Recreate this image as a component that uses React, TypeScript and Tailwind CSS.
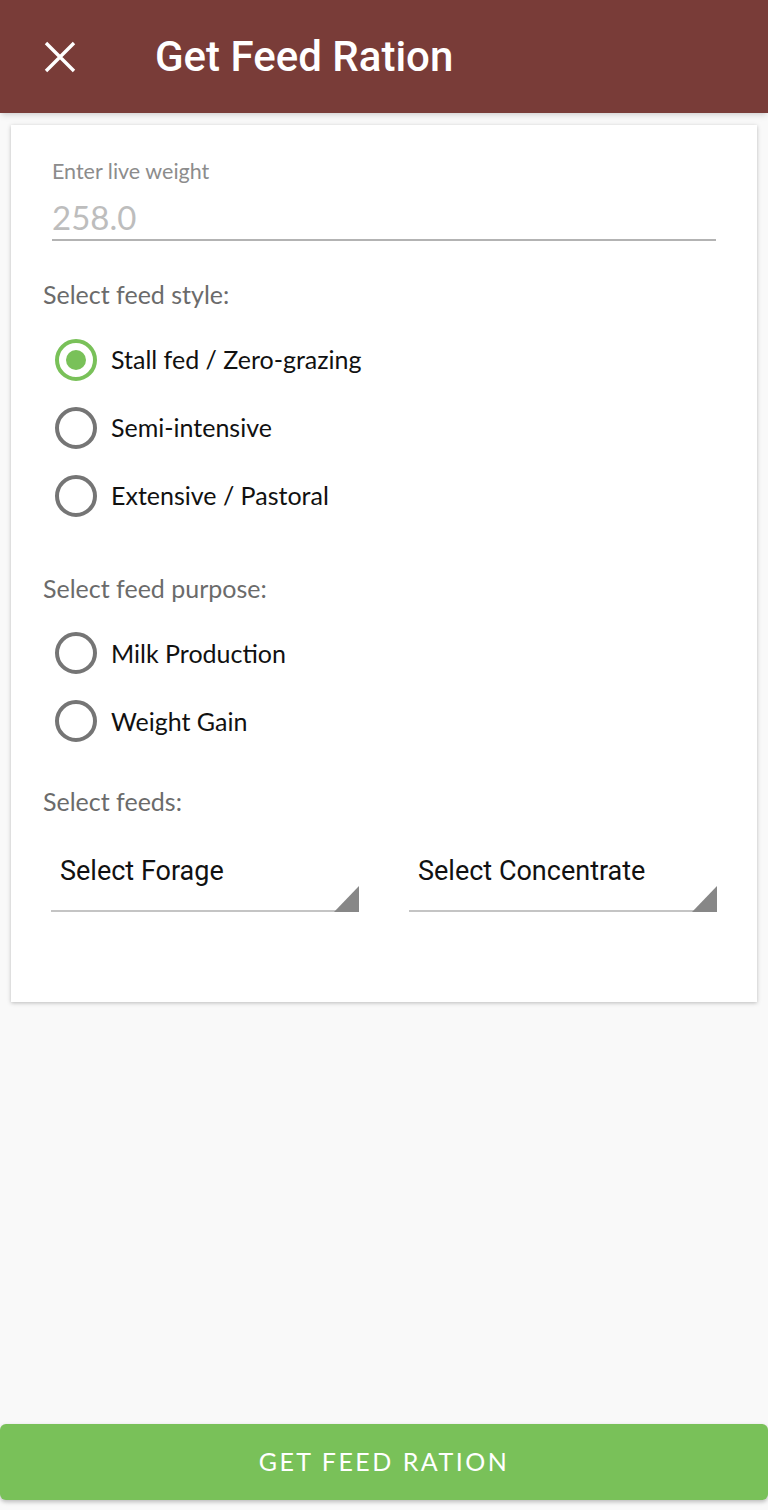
import React, { useState } from "react";

const lato = { fontFamily: "Lato, 'Liberation Sans', sans-serif" };
const roboto = { fontFamily: "Roboto, 'Liberation Sans', sans-serif" };

type RadioProps = { label: string; checked: boolean; onClick: () => void };

const Radio = ({ label, checked, onClick }: RadioProps) => (
  <button type="button" onClick={onClick} className="flex h-[68px] items-center text-left">
    <span
      className={
        checked
          ? "ml-[55px] flex h-[42px] w-[42px] items-center justify-center rounded-full border-[4px] border-[#79c159]"
          : "ml-[55px] flex h-[42px] w-[42px] items-center justify-center rounded-full border-[4px] border-[#757575]"
      }
    >
      {checked && <span className="h-[20px] w-[20px] rounded-full bg-[#79c159]" />}
    </span>
    <span className="ml-[14px] text-[25px] text-[#111]" style={lato}>
      {label}
    </span>
  </button>
);

const Spinner = ({ label }: { label: string }) => (
  <div className="relative h-[77px] border-b-2 border-[#c4c4c4]">
    <div className="pl-[9px] pt-[16px] text-[27px] text-[#111]" style={roboto}>
      {label}
    </div>
    <svg className="absolute bottom-[-2px] right-0" width="25" height="26" viewBox="0 0 25 26">
      <polygon points="25,0 25,26 0,26" fill="#878787" />
    </svg>
  </div>
);

export default function App() {
  const [style, setStyle] = useState("stall");
  const [purpose, setPurpose] = useState("");

  return (
    <div className="flex h-[1510px] w-[768px] flex-col bg-[#f9f9f9]">
      <header className="flex h-[113px] shrink-0 items-center bg-[#793c38] shadow-md">
        <svg className="ml-[44px]" width="32" height="32" viewBox="0 0 32 32">
          <path d="M2 2 L30 30 M30 2 L2 30" stroke="#fff" strokeWidth="3.4" />
        </svg>
        <h1 className="ml-[79px] text-[42px] font-medium text-white" style={roboto}>
          Get Feed Ration
        </h1>
      </header>

      <div className="mx-[11px] mt-[12px] h-[877px] bg-white shadow-[0_1px_4px_rgba(0,0,0,0.25)]">
        <div className="px-[41px] pt-[30px]">
          <div className="text-[21.5px] text-[#8c8c8c]" style={lato}>
            Enter live weight
          </div>
          <div className="mt-[8px] border-b-2 border-[#b3b3b3] text-[33px] leading-[44px] text-[#bdbdbd]" style={lato}>
            258.0
          </div>
        </div>

        <div className="ml-[32px] mt-[35px] text-[25px] text-[#6b6b6b]" style={lato}>
          Select feed style:
        </div>
        <div className="mt-[12px] flex flex-col items-start -ml-[11px]">
          <Radio label="Stall fed / Zero-grazing" checked={style === "stall"} onClick={() => setStyle("stall")} />
          <Radio label="Semi-intensive" checked={style === "semi"} onClick={() => setStyle("semi")} />
          <Radio label="Extensive / Pastoral" checked={style === "ext"} onClick={() => setStyle("ext")} />
        </div>

        <div className="ml-[32px] mt-[40px] text-[25px] text-[#6b6b6b]" style={lato}>
          Select feed purpose:
        </div>
        <div className="mt-[12px] flex flex-col items-start -ml-[11px]">
          <Radio label="Milk Production" checked={purpose === "milk"} onClick={() => setPurpose("milk")} />
          <Radio label="Weight Gain" checked={purpose === "weight"} onClick={() => setPurpose("weight")} />
        </div>

        <div className="ml-[32px] mt-[28px] text-[25px] text-[#6b6b6b]" style={lato}>
          Select feeds:
        </div>
        <div className="mx-[40px] mt-[14px] grid grid-cols-2 gap-x-[50px]">
          <Spinner label="Select Forage" />
          <Spinner label="Select Concentrate" />
        </div>
      </div>

      <div className="flex-1" />

      <button
        type="button"
        className="mb-[10px] h-[76px] w-full rounded-[6px] bg-[#79c159] text-[25px] tracking-[2.5px] text-white shadow-[0_2px_4px_rgba(0,0,0,0.25)]"
        style={lato}
      >
        GET FEED RATION
      </button>
    </div>
  );
}
